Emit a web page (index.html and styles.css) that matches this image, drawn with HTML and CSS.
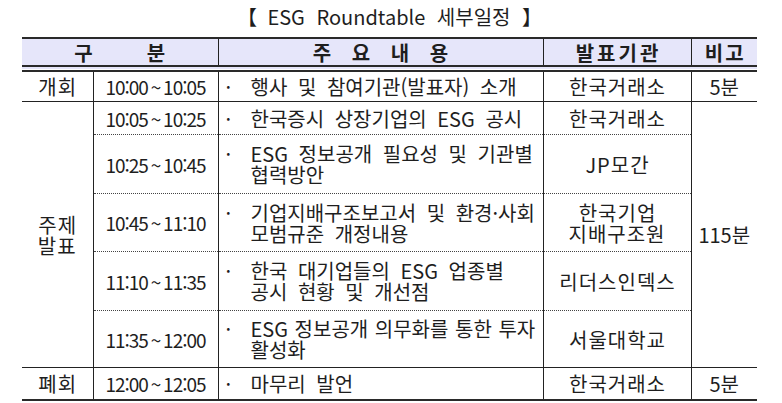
FILE: index.html
```html
<!DOCTYPE html>
<html lang="ko">
<head>
<meta charset="utf-8">
<link rel="stylesheet" href="styles.css">
</head>
<body>
<div class="page">
  <h1 class="title">【 ESG Roundtable 세부일정 】</h1>
  <table class="sched">
    <colgroup>
      <col class="c1"><col class="c2"><col class="c3"><col class="c4"><col class="c5">
    </colgroup>
    <thead>
      <tr>
        <th colspan="2" class="h-gubun"><span>구</span><span>분</span></th>
        <th class="h-spaced">주 요 내 용</th>
        <th class="h-org">발표기관</th>
        <th class="h-note">비고</th>
      </tr>
    </thead>
    <tbody>
      <tr class="r-open">
        <td class="sec">개회</td>
        <td class="time">10:00 ~ 10:05</td>
        <td class="desc"><div class="item"><span class="dot">·</span><span class="txt">행사 및 참여기관(발표자) 소개</span></div></td>
        <td class="org">한국거래소</td>
        <td class="note">5분</td>
      </tr>
      <tr class="r1 dotted">
        <td class="sec" rowspan="5">주제<br>발표</td>
        <td class="time">10:05 ~ 10:25</td>
        <td class="desc"><div class="item"><span class="dot">·</span><span class="txt">한국증시 상장기업의 ESG 공시</span></div></td>
        <td class="org">한국거래소</td>
        <td class="note" rowspan="5">115분</td>
      </tr>
      <tr class="r2 dotted">
        <td class="time">10:25 ~ 10:45</td>
        <td class="desc"><div class="item"><span class="dot">·</span><span class="txt"><span class="ln">ESG 정보공개 필요성 및 기관별</span><span class="ln">협력방안</span></span></div></td>
        <td class="org">JP모간</td>
      </tr>
      <tr class="r3 dotted">
        <td class="time">10:45 ~ 11:10</td>
        <td class="desc"><div class="item"><span class="dot">·</span><span class="txt"><span class="ln">기업지배구조보고서 및 환경·사회</span><span class="ln">모범규준 개정내용</span></span></div></td>
        <td class="org">한국기업<br>지배구조원</td>
      </tr>
      <tr class="r4 dotted">
        <td class="time">11:10 ~ 11:35</td>
        <td class="desc"><div class="item"><span class="dot">·</span><span class="txt"><span class="ln">한국 대기업들의 ESG 업종별</span><span class="ln">공시 현황 및 개선점</span></span></div></td>
        <td class="org">리더스인덱스</td>
      </tr>
      <tr class="r5">
        <td class="time">11:35 ~ 12:00</td>
        <td class="desc"><div class="item"><span class="dot">·</span><span class="txt"><span class="ln tight">ESG 정보공개 의무화를 통한 투자</span><span class="ln">활성화</span></span></div></td>
        <td class="org">서울대학교</td>
      </tr>
      <tr class="r-close">
        <td class="sec">폐회</td>
        <td class="time">12:00 ~ 12:05</td>
        <td class="desc"><div class="item"><span class="dot">·</span><span class="txt">마무리 발언</span></div></td>
        <td class="org">한국거래소</td>
        <td class="note">5분</td>
      </tr>
    </tbody>
  </table>
</div>
</body>
</html>
```

FILE: styles.css
```css
html, body {
  margin: 0;
  padding: 0;
  background: #ffffff;
}

body {
  font-family: "Noto Sans CJK KR", "Noto Sans", sans-serif;
  color: #1e1e1e;
  font-size: 20px;
}

.page {
  width: 735px;
  padding-left: 22px;
  padding-top: 4px;
}

.title {
  margin: 0;
  height: 33px;
  font-size: 20px;
  font-weight: normal;
  line-height: 26px;
  text-align: center;
  word-spacing: 6px;
}

.sched {
  width: 735px;
  border-collapse: collapse;
  table-layout: fixed;
}

.c1 { width: 71px; }
.c2 { width: 125px; }
.c3 { width: 325px; }
.c4 { width: 148px; }
.c5 { width: 66px; }

.sched th,
.sched td {
  padding: 0;
  text-align: center;
  vertical-align: middle;
  line-height: 21px;
  border-left: 1px solid #222;
  border-right: 1px solid #222;
}

.sched th:first-child,
.sched td.sec {
  border-left: none;
}

.sched th:last-child,
.sched td.note {
  border-right: none;
}

.sched thead th {
  background: #e6e6fa;
  font-weight: bold;
  height: 26px;
  border-top: 2px solid #2a2a2a;
  border-bottom: 7px double #2a2a2a;
  font-size: 20px;
}

.h-gubun span {
  display: inline-block;
  margin: 0 27px;
}

.h-spaced {
  word-spacing: 15px;
}

.sched th.h-org {
  letter-spacing: 3px;
  text-indent: 3px;
}

.sched th.h-note {
  letter-spacing: 2px;
  text-indent: 2px;
}

.r-open td { height: 29px; border-bottom: 1px solid #222; }
.r1 td { height: 32px; }
.r2 td { height: 58px; }
.r3 td { height: 57px; }
.r4 td { height: 58px; }
.r5 td { height: 56px; }
.r-close td { height: 31px; border-top: 1px solid #222; border-bottom: 2px solid #2a2a2a; }

.dotted td.time,
.dotted td.desc,
.dotted td.org {
  border-bottom: 1px dotted #444;
}

.r5 td { border-bottom: 1px solid #222; }

.sched td.time {
  font-size: 19px;
  letter-spacing: -1px;
  word-spacing: -1.5px;
}

.sched td.desc {
  text-align: left;
}

.item {
  display: flex;
  padding-left: 7px;
}

.dot {
  flex: 0 0 25px;
}

.txt {
  flex: 1;
  word-spacing: 5px;
  white-space: nowrap;
}

.ln {
  display: block;
}

.ln.tight {
  word-spacing: 1px;
}

.sched td.org {
  letter-spacing: 1px;
  text-indent: 1px;
}

.sched td.sec {
  letter-spacing: 1px;
  text-indent: 1px;
}
```
